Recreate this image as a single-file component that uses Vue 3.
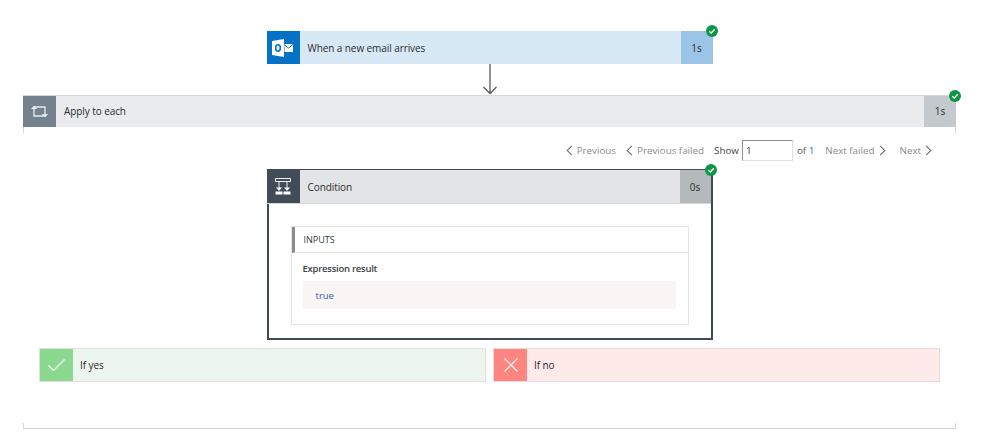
<script setup>
const pager = {
  prev: "Previous",
  prevFailed: "Previous failed",
  nextFailed: "Next failed",
  next: "Next",
};
</script>

<template>
  <div class="page">
    <!-- trigger -->
    <div class="card trigger">
      <div class="icon">
        <svg width="22" height="18" viewBox="0 0 22 18">
          <path d="M0 2 12 0V18L0 16z" fill="#fff" />
          <ellipse cx="6" cy="9" rx="2.300" ry="3.200" fill="none" stroke="#0672c6" stroke-width="1.600" />
          <path d="M12.500 5H21V13H12.500z" fill="#fff" />
          <path d="M12.500 6 16.500 9 21 5.500" fill="none" stroke="#0672c6" stroke-width="1" />
        </svg>
      </div>
      <div class="title">When a new email arrives</div>
      <div class="time">1s</div>
      <span class="ok">
        <svg width="8" height="8" viewBox="0 0 8 8"><path d="M1.300 4.200 3.200 6 6.800 2.200" fill="none" stroke="#fff" stroke-width="1.300" /></svg>
      </span>
    </div>

    <svg class="arrow" width="16" height="31" viewBox="0 0 16 31">
      <path d="M8 0V29.500M1.500 23 8 29.500 14.500 23" fill="none" stroke="#595959" stroke-width="1.300" />
    </svg>

    <!-- loop -->
    <div class="loop">
      <div class="card loop-head">
        <div class="icon">
          <svg width="17" height="13" viewBox="0 0 17 13">
            <path d="M3 2H14V10M3 2V11H13" fill="none" stroke="#e8eaec" stroke-width="1.300" />
            <path d="M0 4 3 .5 6 4zM11 9 14 12.500 17 9z" fill="#e8eaec" />
          </svg>
        </div>
        <div class="title">Apply to each</div>
        <div class="time">1s</div>
        <span class="ok">
          <svg width="8" height="8" viewBox="0 0 8 8"><path d="M1.300 4.200 3.200 6 6.800 2.200" fill="none" stroke="#fff" stroke-width="1.300" /></svg>
        </span>
      </div>

      <div class="pager">
        <span class="link"><i class="chev left"></i>{{ pager.prev }}</span>
        <span class="link failed"><i class="chev left"></i>{{ pager.prevFailed }}</span>
        <span class="show">Show</span>
        <input class="num" value="1" />
        <span class="of">of <b>1</b></span>
        <span class="link">{{ pager.nextFailed }}<i class="chev right"></i></span>
        <span class="link last">{{ pager.next }}<i class="chev right"></i></span>
      </div>

      <div class="cond">
        <div class="card cond-head">
          <div class="icon">
            <svg width="16" height="17" viewBox="0 0 16 17">
              <path d="M.5.500H15.500V3.500H.5z" fill="none" stroke="#f0f1f2" stroke-width="1" />
              <path d="M4 3.500V11M12 3.500V11" fill="none" stroke="#f0f1f2" stroke-width="1" />
              <path d="M1 9.500H7L4 13zM9 9.500H15L12 13z" fill="#fff" />
              <path d="M.5 13.500H7.500V16.500H.5zM8.500 13.500H15.500V16.500H8.500z" fill="#fff" />
            </svg>
          </div>
          <div class="title">Condition</div>
          <div class="time">0s</div>
          <span class="ok">
            <svg width="8" height="8" viewBox="0 0 8 8"><path d="M1.300 4.200 3.200 6 6.800 2.200" fill="none" stroke="#fff" stroke-width="1.300" /></svg>
          </span>
        </div>
        <div class="inputs">
          <div class="inputs-head">INPUTS</div>
          <div class="inputs-body">
            <div class="label">Expression result</div>
            <div class="value">true</div>
          </div>
        </div>
      </div>

      <div class="branches">
        <div class="card yes">
          <div class="icon">
            <svg width="17" height="12" viewBox="0 0 17 12"><path d="M.5 6.500 5.500 11.500 16.500 .5" fill="none" stroke="#fff" stroke-width="1.100" /></svg>
          </div>
          <div class="title">If yes</div>
        </div>
        <div class="card no">
          <div class="icon">
            <svg width="14" height="14" viewBox="0 0 14 14"><path d="M.5.500 13.500 13.500M13.500.5 .5 13.500" fill="none" stroke="#fff" stroke-width="1.100" /></svg>
          </div>
          <div class="title">If no</div>
        </div>
      </div>
    </div>
  </div>
</template>

<style>
body {
  background: #fff;
}
</style>

<style scoped>
.page {
  width: 999px;
  height: 436px;
  box-sizing: border-box;
  padding: 31px 43px 0 23px;
  display: flex;
  flex-direction: column;
  align-items: center;
  overflow: hidden;
  font-family: "Open Sans", "Liberation Sans", sans-serif;
  font-size: 10px;
  color: #2b2b2b;
}

.card {
  position: relative;
  display: flex;
  align-items: stretch;
  box-sizing: border-box;
}
.icon {
  width: 33px;
  flex: none;
  display: flex;
  align-items: center;
  justify-content: center;
}
.title {
  flex: 1;
  display: flex;
  align-items: center;
  padding-left: 8px;
  letter-spacing: -0.08px;
}
.time {
  width: 32px;
  flex: none;
  display: flex;
  align-items: center;
  justify-content: center;
}
.ok {
  position: absolute;
  width: 12px;
  height: 12px;
  border-radius: 50%;
  background: #0d9647;
  display: flex;
  align-items: center;
  justify-content: center;
}

.trigger {
  width: 446px;
  height: 33px;
  background: #d8e9f6;
}
.trigger .icon {
  background: #0672c6;
}
.trigger .time {
  background: #9cc4e6;
}
.trigger .ok {
  top: -6px;
  right: -5px;
}

.arrow {
  display: block;
  flex: none;
}

/* the frame only shows as short ticks at its four corners */
.loop {
  width: 933px;
  height: 334px;
  box-sizing: border-box;
  border-bottom: 1px solid #d4d4d4;
  background:
    linear-gradient(#d4d4d4, #d4d4d4) left top / 1px 38px no-repeat,
    linear-gradient(#d4d4d4, #d4d4d4) right top / 1px 38px no-repeat,
    linear-gradient(#d4d4d4, #d4d4d4) left bottom / 1px 5px no-repeat,
    linear-gradient(#d4d4d4, #d4d4d4) right bottom / 1px 5px no-repeat;
}

.loop-head {
  height: 32px;
  background: #e9ebed;
  border-top: 1px solid #d4d6d8;
}
.loop-head .title,
.loop-head .time {
  padding-bottom: 1px;
}
.loop-head .icon {
  background: #74818f;
}
.loop-head .time {
  background: #c4c9ce;
}
.loop-head .ok {
  top: -6px;
  right: -5px;
}

.pager {
  display: flex;
  align-items: center;
  justify-content: flex-end;
  height: 21px;
  margin-top: 13px;
  padding-right: 26px;
  color: #8b8b8b;
  font-size: 9.800px;
  white-space: nowrap;
}
.link {
  display: flex;
  align-items: center;
  margin-left: 11px;
}
.link.failed {
  margin-left: 12px;
}
.link.last {
  margin-left: 16px;
}
.chev {
  display: block;
  width: 7px;
  height: 7px;
  box-sizing: border-box;
  border-left: 1.500px solid #666;
  border-bottom: 1.500px solid #666;
}
.chev.left {
  transform: rotate(45deg);
  margin-right: 2px;
}
.chev.right {
  transform: rotate(225deg);
  margin-left: 2px;
}
.show {
  margin-left: 10px;
  margin-right: 3px;
  color: #444;
}
.num {
  width: 51px;
  height: 21px;
  box-sizing: border-box;
  padding: 0 3px;
  border: 1px solid #e0e0e0;
  border-top-color: #8e8e8e;
  border-left-color: #8e8e8e;
  font: inherit;
  color: #333;
  outline: none;
}
.of {
  margin-left: 4px;
  color: #555;
}
.of b {
  font-weight: 400;
  color: #2a6fb8;
}

.cond {
  width: 446px;
  height: 171px;
  box-sizing: border-box;
  margin: 8px auto 0;
  border: 2px solid #3f4a57;
  border-top-width: 1px;
  background: #fff;
}
.cond-head {
  height: 34px;
  margin-left: -2px;
  background: #e3e4e6;
  border-bottom: 1px solid #d6d7d9;
}
.cond-head .icon {
  background: #414c58;
}
.cond-head .time {
  width: 31px;
  background: #b4b9bc;
}
.cond-head .ok {
  top: -6px;
  right: -6px;
}

.inputs {
  margin: 22px 22px 0 22px;
  height: 99px;
  box-sizing: border-box;
  border: 1px solid #e4e4e4;
}
.inputs-head {
  height: 26px;
  box-sizing: border-box;
  display: flex;
  align-items: center;
  padding-left: 9px;
  border-left: 3px solid #8a8d92;
  border-bottom: 1px solid #dedede;
  font-size: 9px;
  color: #333a42;
}
.inputs-body {
  padding: 9px 12px 0 11px;
}
.label {
  font-size: 9.500px;
  font-weight: 600;
  letter-spacing: -0.25px;
  line-height: 14px;
  color: #3a3f45;
}
.value {
  height: 28px;
  margin-top: 5px;
  display: flex;
  align-items: center;
  padding-left: 13px;
  background: #faf4f4;
  color: #2a5fa8;
  font-size: 9.500px;
}

.branches {
  display: flex;
  justify-content: space-between;
  margin: 8px 16px 0;
}
.yes,
.no {
  width: 447px;
  height: 34px;
  border: 1px solid #e0e0dc;
}
.yes .title,
.no .title {
  padding-left: 7px;
}
.yes {
  background: #ecf6ee;
}
.yes .icon {
  background: #8ad98e;
}
.no {
  background: #ffeaea;
  border-color: #e6dcdc;
}
.no .icon {
  background: #fe8580;
}
</style>
